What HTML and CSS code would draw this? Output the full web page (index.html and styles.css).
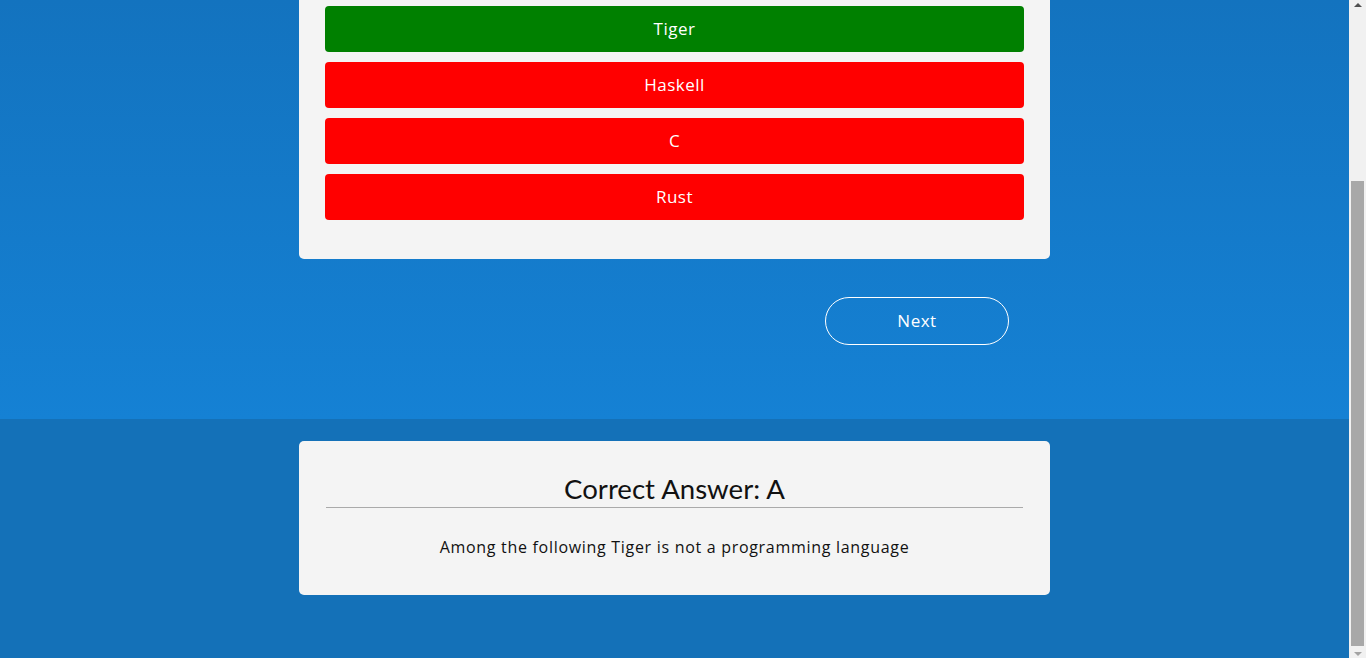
FILE: index.html
```html
<!DOCTYPE html>
<html lang="en">
<head>
<meta charset="utf-8">
<title>Quiz</title>
<link rel="stylesheet" href="styles.css">
</head>
<body>
  <div class="viewport">
    <main class="page">
      <section class="quiz-section">
        <div class="quiz-card">
          <button class="option correct">Tiger</button>
          <button class="option wrong">Haskell</button>
          <button class="option wrong">C</button>
          <button class="option wrong">Rust</button>
        </div>
        <div class="actions">
          <button class="next-btn">Next</button>
        </div>
      </section>
      <section class="answer-section">
        <div class="answer-card">
          <h2 class="answer-title">Correct Answer: A</h2>
          <p class="answer-text">Among the following Tiger is not a programming language</p>
        </div>
      </section>
    </main>
    <aside class="scrollbar">
      <div class="sb-arrow sb-up"></div>
      <div class="sb-track">
        <div class="sb-thumb"></div>
      </div>
      <div class="sb-arrow sb-down"></div>
    </aside>
  </div>
</body>
</html>
```

FILE: styles.css
```css
* { box-sizing: border-box; }
html, body { margin: 0; padding: 0; height: 100%; overflow: hidden; }
body { font-family: "Open Sans", "Noto Sans", sans-serif; }

.viewport { display: flex; height: 658px; }
.page { flex: 1; display: flex; flex-direction: column; background: #1471b8; }

.quiz-section {
  background: linear-gradient(to bottom, #1373bf 0%, #1581d4 100%);
  display: flex;
  flex-direction: column;
  align-items: center;
  height: 419px;
}
.quiz-card {
  width: 751px;
  background: #f4f4f4;
  border-radius: 0 0 5px 5px;
  padding: 6px 26px 39px;
  display: flex;
  flex-direction: column;
  gap: 10px;
}
.option {
  height: 46px;
  border: none;
  border-radius: 4px;
  color: #fff;
  font-family: "Open Sans", sans-serif;
  font-size: 17px;
  font-weight: 500;
  letter-spacing: 0.5px;
  padding: 0 0 2px;
  cursor: pointer;
}
.correct { background: #008000; }
.wrong { background: #ff0000; }

.actions {
  width: 751px;
  display: flex;
  justify-content: flex-end;
  padding: 38px 41px 0 0;
}
.next-btn {
  width: 184px;
  height: 48px;
  border: 1px solid #fff;
  border-radius: 24px;
  background: transparent;
  color: #fff;
  font-family: "Open Sans", sans-serif;
  font-size: 17px;
  font-weight: 500;
  letter-spacing: 0.5px;
  padding: 0 0 2px;
}

.answer-section {
  flex: 1;
  display: flex;
  justify-content: center;
  padding-top: 22px;
}
.answer-card {
  width: 751px;
  height: 154px;
  background: #f4f4f4;
  border-radius: 5px;
  padding: 30px 27px 0;
  text-align: center;
}
.answer-title {
  margin: 0;
  font-family: "Lato", "Noto Sans", sans-serif;
  font-weight: 400;
  font-size: 27.6px;
  line-height: 36px;
  color: #111;
  border-bottom: 1px solid #aaaaaa;
}
.answer-text {
  margin: 28px 0 0;
  font-family: "Open Sans", sans-serif;
  font-size: 16px;
  color: #111;
  letter-spacing: 0.7px;
}

.scrollbar {
  width: 17px;
  background: #f1f1f1;
  display: flex;
  flex-direction: column;
}
.sb-arrow { height: 17px; display: flex; align-items: center; justify-content: center; }
.sb-arrow::before {
  content: "";
  width: 0; height: 0;
  border-left: 4px solid transparent;
  border-right: 4px solid transparent;
}
.sb-up::before { border-bottom: 4px solid #505050; margin-bottom: 8px; }
.sb-down::before { border-top: 4px solid #a3a3a3; margin-top: 8px; }
.sb-track { flex: 1; display: flex; flex-direction: column; justify-content: flex-end; padding: 0 2px 0 2px; }
.sb-thumb { height: 465px; background: #a8a8a8; margin-bottom: -5px; }
```
